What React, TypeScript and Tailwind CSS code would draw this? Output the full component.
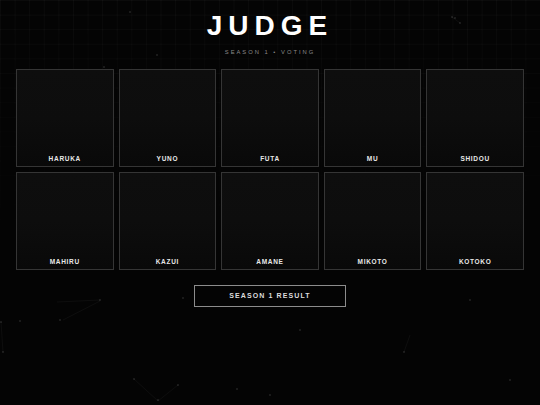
import React from "react";

const contestants = [
  "HARUKA",
  "YUNO",
  "FUTA",
  "MU",
  "SHIDOU",
  "MAHIRU",
  "KAZUI",
  "AMANE",
  "MIKOTO",
  "KOTOKO",
];

function Particles() {
  const dots: [number, number][] = [
    [130, 12], [157, 55], [455, 18], [460, 23], [452, 17], [104, 67],
    [20, 321], [60, 320], [100, 300], [1, 322], [3, 352], [134, 379],
    [158, 400], [178, 385], [183, 298], [237, 389], [300, 330], [404, 352],
    [470, 300], [510, 380], [270, 395], [350, 160], [490, 240],
  ];
  const lines: [number, number, number, number][] = [
    [57, 302, 100, 300],
    [63, 320, 100, 301],
    [1, 322, 3, 352],
    [134, 379, 158, 401],
    [158, 401, 178, 385],
    [452, 17, 460, 23],
    [410, 335, 404, 352],
  ];
  return (
    <svg className="absolute inset-0 pointer-events-none" width={540} height={405}>
      {lines.map(([x1, y1, x2, y2], i) => (
        <line key={i} x1={x1} y1={y1} x2={x2} y2={y2} stroke="#ffffff" strokeOpacity={0.07} strokeWidth={0.6} />
      ))}
      {dots.map(([cx, cy], i) => (
        <circle key={i} cx={cx} cy={cy} r={0.7} fill="#ffffff" fillOpacity={0.25} />
      ))}
    </svg>
  );
}

function Card({ name }: { name: string }) {
  return (
    <div className="aspect-square border border-[#353535] bg-gradient-to-b from-[#0e0e0e] via-[#0d0d0d] to-[#090909] flex items-end justify-center pb-[3px]">
      <span className="text-[6.5px] leading-none font-bold tracking-[0.7px] text-[#e8e8e8]">
        {name}
      </span>
    </div>
  );
}

export default function App() {
  return (
    <div className="relative w-[540px] h-[405px] overflow-hidden bg-[#040404] [font-family:'Liberation_Sans',Arial,sans-serif]">
      {/* fading grid */}
      <div className="absolute inset-0 pointer-events-none bg-[linear-gradient(to_right,rgba(255,255,255,0.03)_1px,transparent_1px),linear-gradient(to_bottom,rgba(255,255,255,0.03)_1px,transparent_1px)] bg-[size:14.6px_14.6px] [mask-image:linear-gradient(to_bottom,black_0%,rgba(0,0,0,0.4)_30%,transparent_70%)]" />
      <Particles />

      <div className="relative flex flex-col items-center pt-[12px]">
        <h1 className="text-[28px] leading-none font-bold tracking-[6px] text-white">JUDGE</h1>
        <p className="mt-[9.5px] text-[5.8px] leading-none tracking-[2px] text-[#8a8a8a]">SEASON 1 • VOTING</p>

        <div className="mt-[14px] w-[508px] grid grid-cols-5 gap-[5px]">
          {contestants.map((n) => (
            <Card key={n} name={n} />
          ))}
        </div>

        <button className="mt-[15px] w-[152px] h-[22px] border border-[#8c8c8c] bg-[#040404] flex items-center justify-center">
          <span className="text-[7px] leading-none font-bold tracking-[1.1px] text-[#dcdcdc]">SEASON 1 RESULT</span>
        </button>
      </div>
    </div>
  );
}
